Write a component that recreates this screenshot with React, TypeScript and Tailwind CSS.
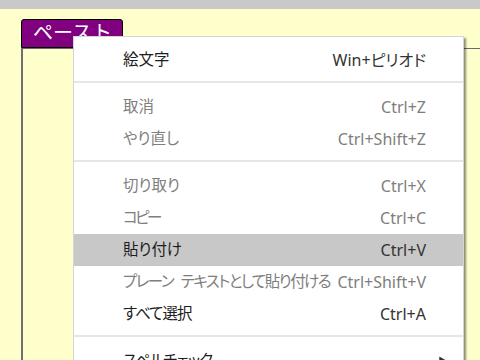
import type { ReactNode } from 'react';

type Item = { label: ReactNode; keys?: string; dim?: boolean; active?: boolean; sub?: boolean; tight?: string } | 'sep';

const ITEMS: Item[] = [
    { label: '絵文字', keys: 'Win+ピリオド' },
    'sep',
    { label: '取消', keys: 'Ctrl+Z', dim: true },
    { label: 'やり直し', keys: 'Ctrl+Shift+Z', dim: true },
    'sep',
    { label: '切り取り', keys: 'Ctrl+X', dim: true },
    { label: 'コピー', keys: 'Ctrl+C', dim: true, tight: 'tracking-[-2.5px]' },
    { label: '貼り付け', keys: 'Ctrl+V', active: true },
    { label: <><span className="mr-[5px]">プレーン</span> テキストとして貼り付ける</>, keys: 'Ctrl+Shift+V', dim: true, tight: 'tracking-[-1.5px]' },
    { label: 'すべて選択', keys: 'Ctrl+A', tight: 'tracking-[-1px]' },
    'sep',
    { label: 'スペルチェック', sub: true, tight: 'tracking-[-1px]' },
];

const font = { fontFamily: '"Noto Sans", "Noto Sans CJK JP", sans-serif' };

const App = () => {
    return (
        <div className="relative w-[480px] h-[360px] overflow-hidden bg-[#ffffcc]" style={font}>
            <div className="h-[9px] bg-[#c9c9c9]"></div>
            <div className="pl-[21px] pt-[10px]">
                <div className="w-[102px] h-[29px] bg-[#800080] border border-black rounded-t-[3px] text-white text-[20px] leading-[26px] pl-[11px] whitespace-nowrap">
                    ペースト
                </div>
                <div className="h-[320px] border-l-2 border-t border-l-[#707070] border-t-[#6a6a6a]"></div>
            </div>

            <div className="absolute left-[73px] top-[36px] w-[391px] bg-white border border-[#d4d4dc] shadow-[2px_2px_2px_rgba(0,0,0,0.45)] pt-[7px]">
                {ITEMS.map((item, i) => {
                    if (item === 'sep') {
                        return <div key={i} className="pt-[5px] pb-[8px]"><div className="h-[2px] bg-[#e6e6e6]"></div></div>
                    }
                    return (
                        <div key={i} className={"flex items-center justify-between h-8 pl-[49px] pr-[37px] " + (item.active ? 'bg-[#c8c8c8] ' : '') + (item.dim ? 'text-[#7e7e7e]' : 'text-[#1e1e1e]')}>
                            <span className={"whitespace-nowrap text-[15.5px] [font-feature-settings:'palt'] " + (item.tight || '')}>{item.label}</span>
                            {item.keys && <span className={"whitespace-nowrap text-[16px] [font-feature-settings:'palt'] " + (item.dim ? '' : 'text-[#333333]')}>{item.keys}</span>}
                            {item.sub && <span className="mr-[-22px] text-[#333] text-[10px]">▶</span>}
                        </div>
                    )
                })}
            </div>
        </div>
    )
}

export default App
